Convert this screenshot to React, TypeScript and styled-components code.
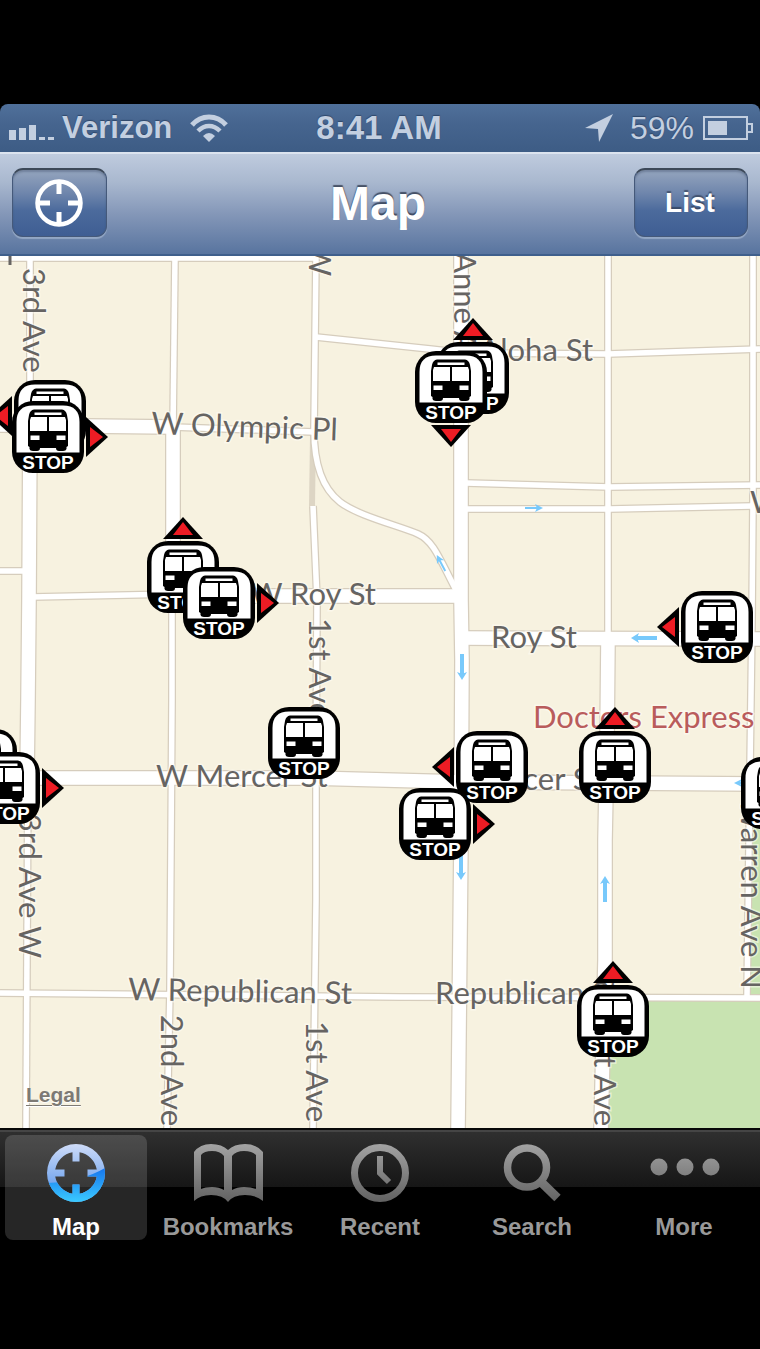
import React from "react";
import styled, { createGlobalStyle, css } from "styled-components";

const GlobalStyle = createGlobalStyle`
  * { box-sizing: border-box; }
  body { margin: 0; background: #000; }
  button { appearance: none; border: 0; padding: 0; margin: 0; background: none; font: inherit; color: inherit; cursor: pointer; }
`;

const sans = `"Liberation Sans", Arial, sans-serif`;

const Screen = styled.div`
  display: flex;
  flex-direction: column;
  padding: 104px 0 109px;
  background: #000;
  font-family: ${sans};
`;

const StatusBar = styled.header`
  display: grid;
  grid-template-columns: 1fr auto 1fr;
  align-items: center;
  height: 48px;
  padding: 0 7px 0 9px;
  border-radius: 8px 8px 0 0;
  background: linear-gradient(#50709a 0%, #46658f 40%, #3d5c85 100%);
  color: #c3cfe0;
  text-shadow: 0 -1px 1px rgba(30, 50, 80, 0.6);
`;

const StatusGroup = styled.div<{ $end?: boolean }>`
  display: flex;
  align-items: center;
  gap: ${(p) => (p.$end ? 9 : 7)}px;
  justify-content: ${(p) => (p.$end ? "flex-end" : "flex-start")};
`;

const StatusText = styled.span<{ $size: number; $bold?: boolean }>`
  font-size: ${(p) => p.$size}px;
  font-weight: ${(p) => (p.$bold ? 700 : 400)};
  line-height: 36px;
  white-space: nowrap;
`;

const Clock = styled(StatusText)`
  margin-right: 4px;
`;

const Glyph = styled.svg<{ $after?: number; $before?: number; $down?: number }>`
  display: block;
  flex: none;
  overflow: visible;
  margin-top: ${(p) => p.$down ?? 0}px;
  margin-right: ${(p) => p.$after ?? 0}px;
  margin-left: ${(p) => p.$before ?? 0}px;
`;

const NavBar = styled.div`
  display: grid;
  grid-template-columns: 1fr auto 1fr;
  align-items: center;
  height: 104px;
  padding: 0 12px 3px;
  border-top: 2px solid #dbe3ee;
  border-bottom: 2px solid #3f5f8c;
  background: linear-gradient(#bfcbde 0%, #a9b8cf 28%, #8497b8 60%, #58749f 100%);
`;

const NavTitle = styled.h1`
  margin: 2px 4px 0 0;
  font-size: 48px;
  line-height: 54px;
  font-weight: 700;
  color: #fff;
  text-shadow: 0 -2px 1px rgba(40, 50, 70, 0.75);
`;

const NavButton = styled.button<{ $end?: boolean; $width: number }>`
  display: flex;
  align-items: center;
  justify-content: center;
  justify-self: ${(p) => (p.$end ? "end" : "start")};
  width: ${(p) => p.$width}px;
  height: 69px;
  padding: 0 2px 1px 0;
  border: 1px solid #45597a;
  border-top: 2px solid #3c4858;
  border-radius: 11px;
  background: linear-gradient(#95a5be 0%, #6f86ac 35%, #4b6a9c 62%, #3f5e93 100%);
  box-shadow: 0 2px 1px rgba(190, 205, 225, 0.5), inset 0 2px 2px rgba(50, 65, 95, 0.35);
  color: #fff;
  font-size: 28px;
  font-weight: 700;
  line-height: 32px;
  text-shadow: 0 -2px 1px rgba(40, 50, 70, 0.6);
`;

const MapView = styled.main`
  position: relative;
  width: 100%;
  aspect-ratio: 760 / 872;
  overflow: hidden;
  background: #f7f2e0;
`;

const Streets = styled.svg`
  display: block;
  width: 100%;
  height: 100%;
`;

const StreetName = styled.text`
  font-family: Lato, "Open Sans", sans-serif;
  font-size: 31px;
  fill: #666462;
  paint-order: stroke;
  stroke: rgba(255, 253, 246, 0.55);
  stroke-width: 3px;
`;

const PlaceName = styled(StreetName)`
  fill: #b95c5c;
`;

const LegalLink = styled.a`
  position: absolute;
  left: 26px;
  bottom: 20px;
  color: #7d7a74;
  font-size: 21px;
  line-height: 26px;
  font-weight: 700;
  text-decoration: underline;
  text-decoration-thickness: 1px;
  text-underline-offset: 3px;
  text-shadow: 0 1px 1px #fff;
`;

type Dir = "up" | "down" | "left" | "right";

const Pin = styled.button`
  position: absolute;
  width: 72px;
  height: 72px;
`;

const PinArt = styled.svg`
  position: absolute;
  inset: 0;
  display: block;
`;

const PinLabel = styled.span`
  position: absolute;
  left: 0;
  right: 0;
  bottom: 0;
  color: #fff;
  font-size: 19px;
  font-weight: 700;
  line-height: 20px;
  text-align: center;
`;

const arrowPlace = {
  up: css`left: 16px; top: -24px;`,
  down: css`left: 16px; bottom: -24px; transform: rotate(180deg);`,
  left: css`left: -33px; top: 25px; transform: rotate(-90deg);`,
  right: css`right: -33px; top: 25px; transform: rotate(90deg);`,
};

const PinArrow = styled.svg<{ $dir: Dir }>`
  position: absolute;
  display: block;
  ${(p) => arrowPlace[p.$dir]}
`;

const TabBar = styled.nav`
  display: flex;
  gap: 10px;
  height: 113px;
  padding: 5px 5px 0;
  border-top: 2px solid #080808;
  box-shadow: inset 0 2px 0 #454545;
  background: linear-gradient(#303030 0, #161616 57px, #000 57px);
`;

const Tab = styled.button<{ $active?: boolean }>`
  display: flex;
  flex: 1 1 0;
  flex-direction: column;
  align-items: center;
  gap: 13px;
  height: 105px;
  padding-top: 9px;
  border-radius: 8px;
  background: ${(p) => (p.$active ? "rgba(255, 255, 255, 0.15)" : "none")};
  color: ${(p) => (p.$active ? "#fff" : "#999")};
  font-size: 24px;
  font-weight: 700;
  line-height: 24px;
`;

const localStreets = [
  "M0 258H316",
  "M30 256V428",
  "M28 776L26 1128",
  "M175 256L173 430",
  "M172 590L172 700L170 990L167 1130",
  "M316 256L314 430C314 464 322 488 340 502C358 516 400 526 418 534C434 541 440 560 457 592",
  "M313 506L317 600L316 780L316 900L313 1130",
  "M608 256V640",
  "M753 256L753 500L752 620L750 770L747 996",
  "M316 337L430 349L465 353L608 354L760 349",
  "M173 427L314 432",
  "M466 483L610 487L760 485",
  "M466 509L610 509L752 506",
  "M0 571H24",
  "M32 597L176 594",
  "M0 993L400 997L760 998",
];

const arterials = [
  "M30 426L29 600L28 700L27 778",
  "M173 428V592",
  "M461 256L461 600L462 660L461 840L458 1130",
  "M608 638L607 740L605 840L605 960L601 1130",
  "M0 425L172 427",
  "M174 596H461",
  "M461 638L760 639",
  "M0 778L310 778L461 782L760 784",
];

const trafficArrows: [number, number, number, number][] = [
  [534, 508, 0, 18],
  [644, 638, 180, 26],
  [462, 667, 90, 26],
  [461, 867, 90, 26],
  [605, 889, -90, 26],
  [441, 563, -118, 18],
  [741, 783, 180, 14],
];

type Label = { t: string; x: number; y: number; r?: number; end?: boolean };

const labels: Label[] = [
  { t: "3rd Ave", x: 23, y: 268, r: 90 },
  { t: "W", x: 309, y: 276, r: 90, end: true },
  { t: "Anne Ave", x: 454, y: 252, r: 90 },
  { t: "Aloha St", x: 593, y: 361, end: true },
  { t: "W Olympic Pl", x: 151, y: 434, r: 2 },
  { t: "W Roy St", x: 376, y: 605, end: true },
  { t: "1st Ave", x: 309, y: 618, r: 90 },
  { t: "Roy St", x: 491, y: 648 },
  { t: "W Mercer St", x: 156, y: 787 },
  { t: "Mercer St", x: 468, y: 790 },
  { t: "W Republican St", x: 128, y: 1000, r: 1 },
  { t: "Republican St", x: 435, y: 1004 },
  { t: "3rd Ave W", x: 19, y: 958, r: 90, end: true },
  { t: "2nd Ave", x: 161, y: 1126, r: 90, end: true },
  { t: "1st Ave", x: 306, y: 1122, r: 90, end: true },
  { t: "1st Ave", x: 594, y: 1126, r: 90, end: true },
  { t: "Warren Ave N", x: 741, y: 989, r: 90, end: true },
  { t: "W", x: 750, y: 513 },
];

const stops: { x: number; y: number; dir?: Dir }[] = [
  { x: 14, y: 380, dir: "left" },
  { x: 12, y: 401, dir: "right" },
  { x: 437, y: 342, dir: "up" },
  { x: 415, y: 351, dir: "down" },
  { x: 147, y: 541, dir: "up" },
  { x: 183, y: 567, dir: "right" },
  { x: 268, y: 707 },
  { x: 681, y: 591, dir: "left" },
  { x: 456, y: 731, dir: "left" },
  { x: 399, y: 788, dir: "right" },
  { x: 579, y: 731, dir: "up" },
  { x: 577, y: 985, dir: "up" },
  { x: 741, y: 757 },
  { x: -55, y: 729, dir: "left" },
  { x: -32, y: 752, dir: "right" },
];

function BusStop({ x, y, dir }: { x: number; y: number; dir?: Dir }) {
  return (
    <Pin
      aria-label="Bus stop"
      style={{ left: `${(x / 760) * 100}%`, top: `${((y - 256) / 872) * 100}%` }}
    >
      {dir && (
        <PinArrow $dir={dir} width="40" height="22" viewBox="0 0 40 22">
          <path d="M20 0L40 22H0Z" fill="#000" />
          <path d="M20 5L30 18H10Z" fill="#ee1c24" />
        </PinArrow>
      )}
      <PinArt width="72" height="72" viewBox="0 0 72 72">
        <rect width="72" height="72" rx="21" fill="#000" />
        <path d="M4.500 51.500V21Q4.500 4.500 21 4.500H51Q67.500 4.500 67.500 21V51.500Z" fill="#fff" />
        <path
          d="M22 8.500H50Q54 9 55 14L56 20V45L54.500 46V48Q54 50 51 50H47Q44 50 44 47H28Q28 50 25 50H21Q18 50 17.500 48V46L16 45V20L17 14Q18 9 22 8.500Z"
          fill="#000"
        />
        <path d="M22.500 11.500H49.500V14H22.500ZM19 16H35V30H18V19ZM37 16H53L54 19V30H37ZM18.500 34.500H27.500V39H18.500ZM44.500 34.500H53.500V39H44.500Z" fill="#fff" />
      </PinArt>
      <PinLabel>STOP</PinLabel>
    </Pin>
  );
}

function CityMap() {
  return (
    <Streets viewBox="0 256 760 872">
      <path d="M610 998H760V1130H606Z" fill="#c8e3b1" />
      <path d="M752 784H760V994H750Z" fill="#c8e3b1" />
      <path d="M313 436L312 506" stroke="#ddd5c4" strokeWidth="6" fill="none" />
      <g fill="none" stroke="#d6cdbd" strokeLinejoin="round">
        <g strokeWidth="8">{localStreets.map((d) => <path key={d} d={d} />)}</g>
        <g strokeWidth="16">{arterials.map((d) => <path key={d} d={d} />)}</g>
      </g>
      <g fill="none" stroke="#fff" strokeLinejoin="round">
        <g strokeWidth="5.500">{localStreets.map((d) => <path key={d} d={d} />)}</g>
        <g strokeWidth="13.500">{arterials.map((d) => <path key={d} d={d} />)}</g>
      </g>
      {trafficArrows.map(([x, y, a, len]) => (
        <g key={`${x}-${y}`} transform={`translate(${x} ${y}) rotate(${a})`} fill="#78c9fb">
          <path
            d={`M${-len / 2} ${len > 20 ? -2 : -1}H${len / 2 - 5}V${len > 20 ? 2 : 1}H${-len / 2}Z`}
          />
          <path d={`M${len / 2} 0L${len / 2 - 8} ${len > 20 ? 5 : 4}L${len / 2 - 6} 0L${len / 2 - 8} ${len > 20 ? -5 : -4}Z`} />
        </g>
      ))}
      <path d="M10 256V265" stroke="#666462" strokeWidth="3" />
      {labels.map((l) => (
        <StreetName
          key={`${l.t}-${l.x}`}
          textAnchor={l.end ? "end" : "start"}
          transform={`translate(${l.x} ${l.y}) rotate(${l.r ?? 0})`}
        >
          {l.t}
        </StreetName>
      ))}
      <PlaceName x="533" y="728">Doctors Express</PlaceName>
    </Streets>
  );
}

const crosshair =
  "M29 0A29 29 0 1 1 29 58A29 29 0 1 1 29 0ZM32.500 8.200V17.500H25.500V8.200A21.500 21.500 0 0 0 8.200 25.500H17.500V32.500H8.200A21.500 21.500 0 0 0 25.500 49.800V40.500H32.500V49.800A21.500 21.500 0 0 0 49.800 32.500H40.500V25.500H49.800A21.500 21.500 0 0 0 32.500 8.200Z";

function TabIcon({ name }: { name: string }) {
  return (
    <Glyph width="70" height="58" viewBox="0 0 70 58">
      <defs>
        <linearGradient id="silver" gradientUnits="userSpaceOnUse" x1="0" y1="0" x2="0" y2="58">
          <stop offset="0" stopColor="#a3a3a3" />
          <stop offset="1" stopColor="#626262" />
        </linearGradient>
        <linearGradient id="sky" gradientUnits="userSpaceOnUse" x1="0" y1="0" x2="0" y2="40">
          <stop offset="0" stopColor="#cfdcf8" />
          <stop offset="1" stopColor="#74a6ee" />
        </linearGradient>
        <linearGradient id="deep" gradientUnits="userSpaceOnUse" x1="0" y1="24" x2="0" y2="58">
          <stop offset="0" stopColor="#1676ee" />
          <stop offset="1" stopColor="#3bcaff" />
        </linearGradient>
        <clipPath id="lower">
          <path d="M0 39Q34 38 58 24V58H0Z" />
        </clipPath>
      </defs>
      {name === "Map" && (
        <g transform="translate(6 0)" fillRule="evenodd">
          <path d={crosshair} fill="url(#sky)" />
          <path d={crosshair} fill="url(#deep)" clipPath="url(#lower)" />
        </g>
      )}
      {name === "Bookmarks" && (
        <path
          fill="url(#silver)"
          fillRule="evenodd"
          d="M1 8Q7 0 18 0Q29 0 35 6Q41 0 52 0Q63 0 70 8V57Q63 51 52 51Q40 51 35 58Q30 51 18 51Q7 51 1 57ZM8 11V45Q12 43 19 43Q26 43 31 46V12Q27 7 19 7Q11 7 8 11ZM39 12V46Q44 43 51 43Q58 43 63 45V11Q59 7 51 7Q43 7 39 12Z"
        />
      )}
      {name === "Recent" && (
        <g fill="none" stroke="url(#silver)" strokeWidth="7">
          <circle cx="35" cy="29" r="25.500" />
          <path d="M35 12V29L44 38" strokeWidth="6" />
        </g>
      )}
      {name === "Search" && (
        <g fill="none" stroke="url(#silver)">
          <circle cx="30" cy="23.500" r="19.500" strokeWidth="7.500" />
          <path d="M43 37L60.500 54" strokeWidth="9" />
        </g>
      )}
      {name === "More" && (
        <g fill="url(#silver)">
          <circle cx="10" cy="23" r="8.500" />
          <circle cx="36" cy="23" r="8.500" />
          <circle cx="62" cy="23" r="8.500" />
        </g>
      )}
    </Glyph>
  );
}

export default function App() {
  return (
    <Screen>
      <GlobalStyle />
      <StatusBar>
        <StatusGroup>
          <Glyph $down={7} width="46" height="16" viewBox="0 0 46 16" fill="currentColor">
            <path d="M0 6H7V16H0ZM10 4H17V16H10ZM20 1H27V16H20ZM30 13H36V16H30ZM39 13H45V16H39Z" />
          </Glyph>
          <StatusText $size={31} $bold>Verizon</StatusText>
          <Glyph $before={11} width="38" height="28" viewBox="0 0 38 28">
            <g fill="none" stroke="currentColor" strokeWidth="5">
              <path d="M2 11Q9 3 19 3Q29 3 36 11" />
              <path d="M8 17Q13 12 19 12Q25 12 30 17" strokeWidth="4.500" />
            </g>
            <path d="M13 22Q19 16 25 22L19 28Z" fill="currentColor" />
          </Glyph>
        </StatusGroup>
        <Clock $size={33} $bold>8:41 AM</Clock>
        <StatusGroup $end>
          <Glyph $after={8} width="28" height="28" viewBox="0 0 28 28">
            <path d="M28 0L14 28L13 15L0 14Z" fill="currentColor" />
          </Glyph>
          <StatusText $size={32}>59%</StatusText>
          <Glyph width="50" height="24" viewBox="0 0 50 24">
            <path d="M1 1H44V23H1ZM45 8H49V16H45" fill="none" stroke="currentColor" strokeWidth="2" />
            <path d="M5 5H24V19H5Z" fill="currentColor" />
          </Glyph>
        </StatusGroup>
      </StatusBar>
      <NavBar>
        <NavButton $width={95} aria-label="Current location">
          <Glyph width="48" height="48" viewBox="0 0 48 48" fill="none" stroke="#fff">
            <circle cx="24" cy="24" r="21.500" strokeWidth="4.500" />
            <path d="M24 2V15M24 33V46M2 24H15M33 24H46" strokeWidth="5" />
          </Glyph>
        </NavButton>
        <NavTitle>Map</NavTitle>
        <NavButton $width={114} $end>List</NavButton>
      </NavBar>
      <MapView>
        <CityMap />
        {stops.map((s) => (
          <BusStop key={`${s.x}-${s.y}`} {...s} />
        ))}
        <LegalLink href="#legal">Legal</LegalLink>
      </MapView>
      <TabBar>
        {["Map", "Bookmarks", "Recent", "Search", "More"].map((name) => (
          <Tab key={name} $active={name === "Map"}>
            <TabIcon name={name} />
            {name}
          </Tab>
        ))}
      </TabBar>
    </Screen>
  );
}
